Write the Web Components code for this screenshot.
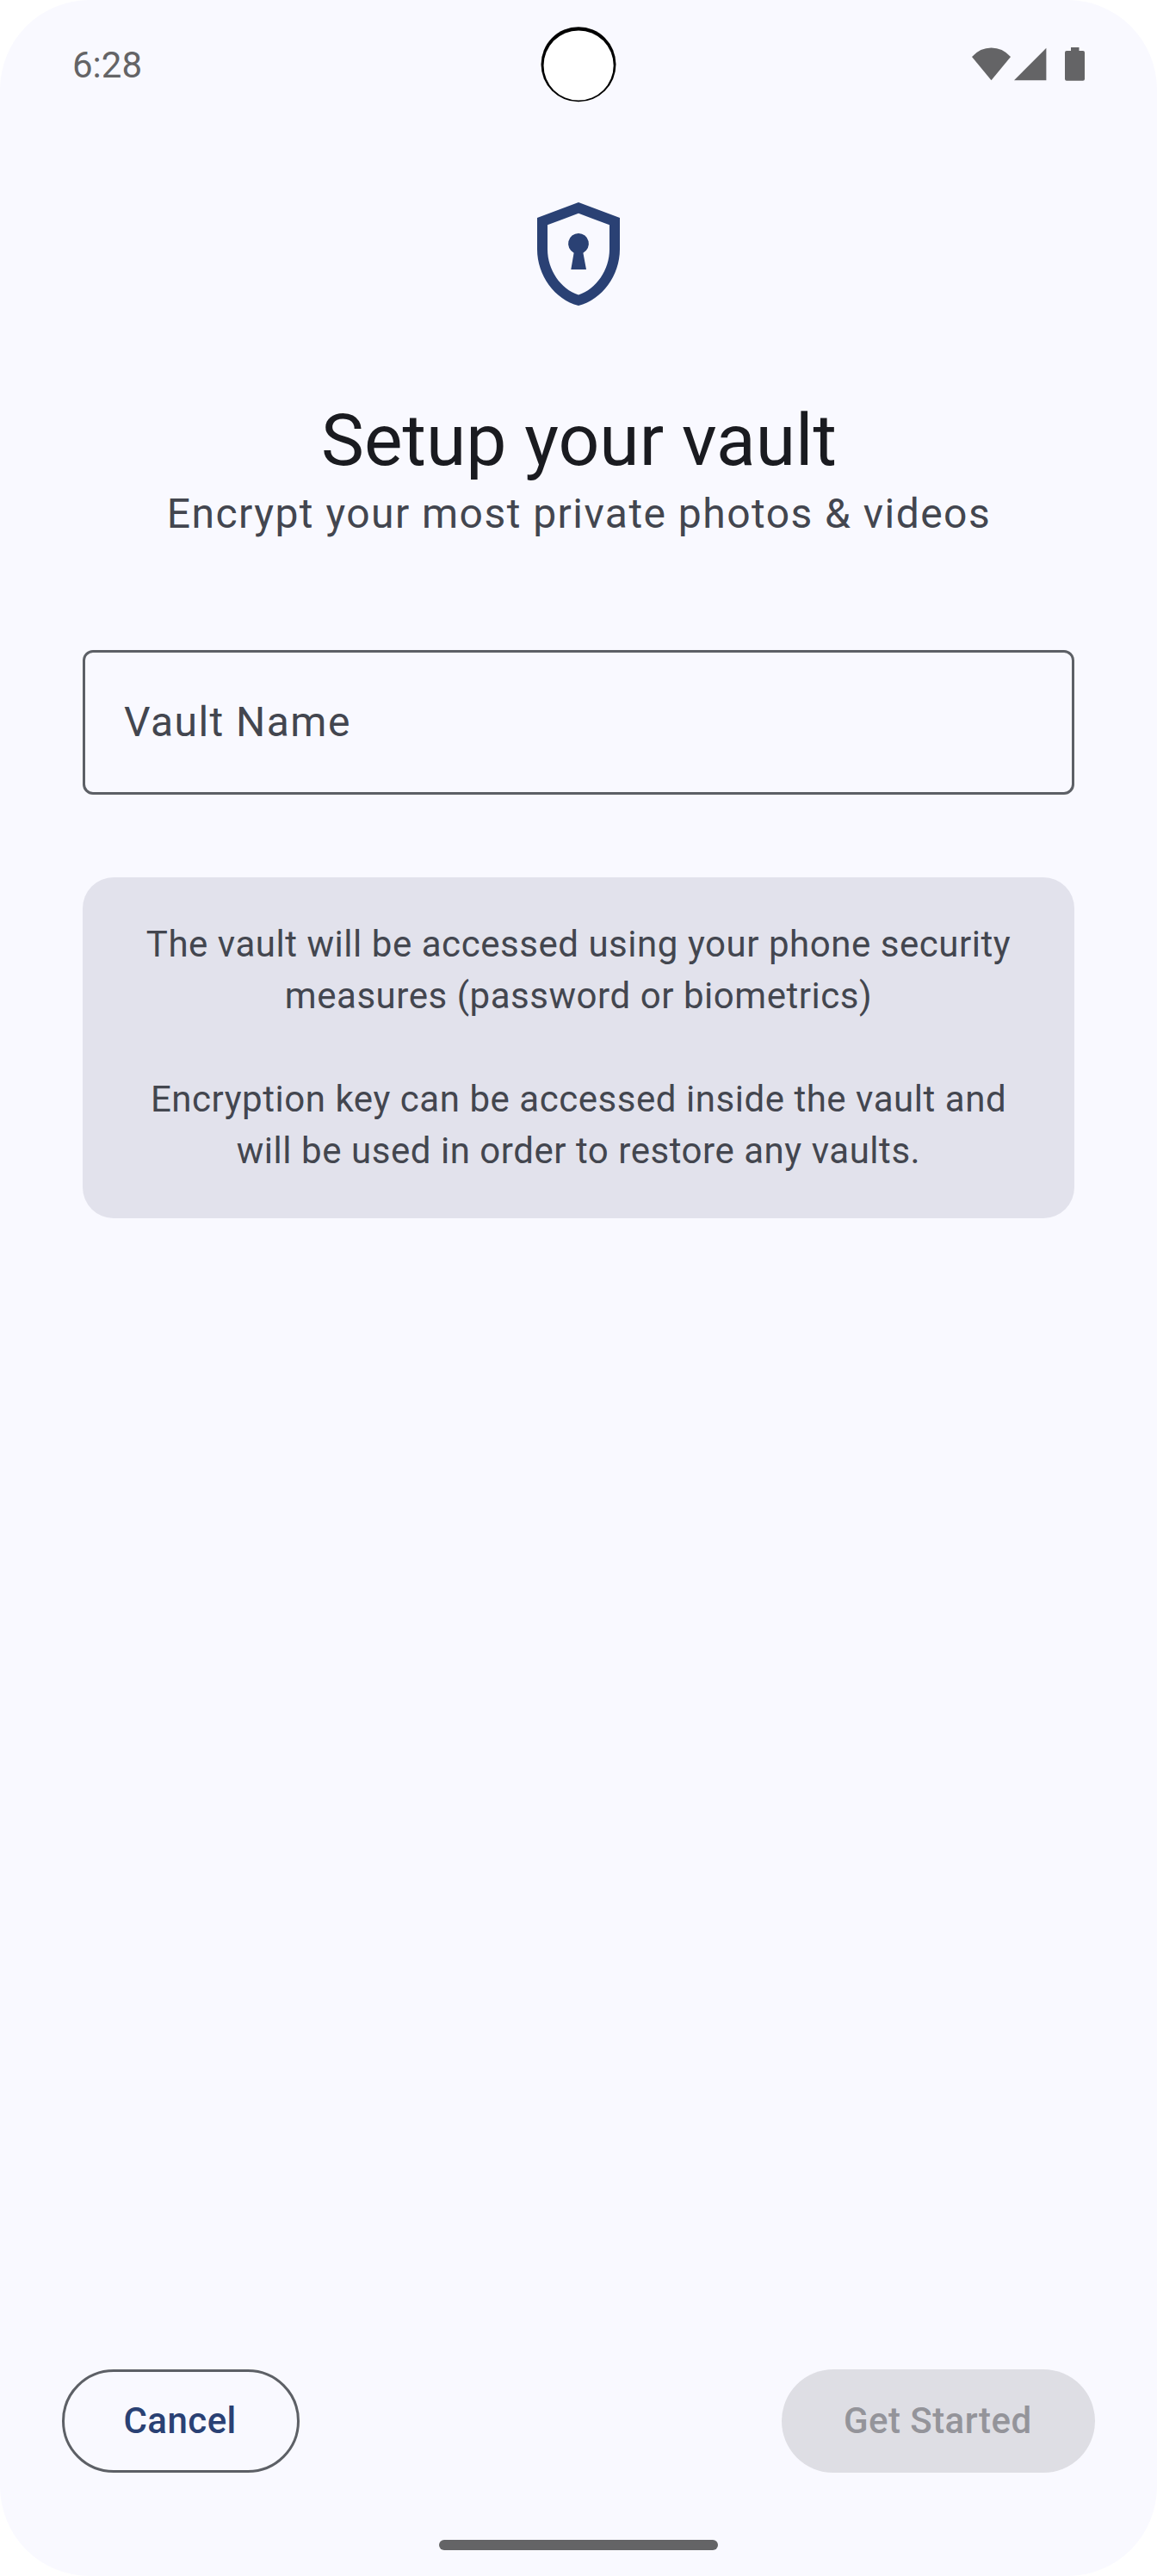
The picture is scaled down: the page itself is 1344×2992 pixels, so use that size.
<!DOCTYPE html>
<html lang="en">
<head>
<meta charset="utf-8">
<title>Setup your vault</title>
<style>
html,body{margin:0;background:#fff}
body{font-family:Roboto,"Liberation Sans",sans-serif}
</style>
</head>
<body>
<vault-screen></vault-screen>
<script>
function define(name, html){
  const t=document.createElement('template');
  t.innerHTML=html;
  customElements.define(name,class extends HTMLElement{
    constructor(){
      super();
      this.attachShadow({mode:'open'}).appendChild(t.content.cloneNode(true));
    }
  });
}
define('status-bar',`
<style>
:host{display:grid;grid-template-columns:1fr 144px 1fr;height:150px;color:#646466;box-sizing:border-box}
.time{padding:51px 0 0 84px;font-size:42px;line-height:50px}
svg{display:block}
.icons{justify-self:end}
</style>
<div class="time"><slot></slot></div>
<svg width="144" height="150" viewBox="600 0 144 150"><circle cx="672" cy="74.8" r="43.5" fill="#000"/><circle cx="672.1" cy="76" r="40.6" fill="#fff"/></svg>
<svg class="icons" width="244" height="150" viewBox="1100 0 244 150" fill="#646466">
<path d="M1151.5 93.2 1129 66Q1138.5 55.6 1151.5 55.6T1174 66Z"/>
<path d="M1178 93.3H1215.4V55.8Z"/>
<path d="M1244 55h9.500v4h4.500a2 2 0 0 1 2 2v30.800a2 2 0 0 1-2 2h-19a2 2 0 0 1-2-2V61a2 2 0 0 1 2-2h5z"/>
</svg>`);
define('shield-icon',`
<style>:host{display:block;width:144px;height:144px}svg{display:block}</style>
<svg width="144" height="144" viewBox="0 0 24 24" fill="#2a4174">
<path fill-rule="evenodd" d="M12 2 4 5v6.090c0 5.050 3.410 9.760 8 10.910 4.590-1.150 8-5.860 8-10.910V5zM18 11.090c0 4-2.550 7.700-6 8.830-3.450-1.130-6-4.820-6-8.830v-4.700l6-2.250 6 2.250z"/>
<path d="M12 8a2 2 0 0 0-.9 3.780L10.550 15h2.950l-.6-3.220A2 2 0 0 0 12 8z"/>
</svg>`);
define('vault-heading',`
<style>
:host{display:flex;flex-direction:column;align-items:center;text-align:center;padding-left:1px}
h1{margin:0;font-weight:400;font-size:84px;line-height:98px;color:#1a1b20}
p{margin:0;font-size:48px;line-height:72px;letter-spacing:1.46px;color:#43464f}
</style>
<h1><slot name="title"></slot></h1><p><slot></slot></p>`);
define('outlined-field',`
<style>
:host{display:flex;align-items:center;box-sizing:border-box;height:168px;border:3px solid #5d6066;border-radius:12px;padding:0 45px;font-size:48px;line-height:72px;letter-spacing:1.46px;color:#43464f}
</style><span><slot></slot></span>`);
define('info-card',`
<style>
:host{display:flex;flex-direction:column;gap:60px;padding:48px;border-radius:36px;background:#e2e2ec;color:#43464f;font-size:42px;line-height:60px;letter-spacing:.54px;text-align:center}
::slotted(p){margin:0}
</style><slot></slot>`);
define('pill-button',`
<style>
:host{display:block}
button{display:block;box-sizing:border-box;height:120px;margin:0;padding:0 70.5px 0 68.5px;border:3px solid #5d6066;border-radius:60px;background:none;font:500 42px/60px Roboto,"Liberation Sans",sans-serif;letter-spacing:.45px;color:#2a4174;white-space:nowrap}
:host([disabled]) button{border-color:transparent;background:#dedee4 border-box;color:#94949a}
</style><button><slot></slot></button>`);
define('nav-handle',`
<style>:host{display:block;width:324px;height:12px;border-radius:6px;background:#646466}</style>`);
define('vault-screen',`
<style>
:host{display:flex;flex-direction:column;width:1344px;height:2992px;border-radius:104px;background:#f9f9ff;overflow:hidden}
main{flex:1;display:flex;flex-direction:column;padding:73px 96px 0}
shield-icon{align-self:center}
vault-heading{margin-top:96px}
outlined-field{margin-top:122px}
info-card{margin-top:96px}
footer{display:flex;justify-content:space-between;padding:0 72px}
nav-handle{margin:78px auto 30px}
</style>
<status-bar>6:28</status-bar>
<main>
<shield-icon></shield-icon>
<vault-heading><span slot="title">Setup your vault</span>Encrypt your most private photos &amp; videos</vault-heading>
<outlined-field>Vault Name</outlined-field>
<info-card><p>The vault will be accessed using your phone security<br>measures (password or biometrics)</p><p>Encryption key can be accessed inside the vault and<br>will be used in order to restore any vaults.</p></info-card>
</main>
<footer><pill-button>Cancel</pill-button><pill-button disabled>Get Started</pill-button></footer>
<nav-handle></nav-handle>`);
</script>
</body>
</html>
